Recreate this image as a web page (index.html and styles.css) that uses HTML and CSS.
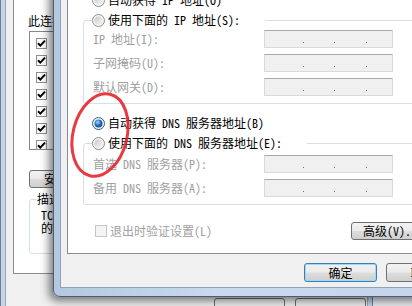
FILE: index.html
```html
<!DOCTYPE html>
<html lang="zh-CN">
<head>
<meta charset="utf-8">
<title>Internet 协议版本 4 (TCP/IPv4) 属性</title>
<link rel="stylesheet" href="styles.css">
</head>
<body>
<div class="desk">
  <div class="bgwin">
    <div class="bgface">
      <div class="panel">
        <div class="plabel">此连接使用下列项目(O):</div>
        <div class="list">
          <div class="li"><span class="cb"><svg width="11" height="11" viewBox="0 0 11 11"><path d="M2 5.2 L4.3 7.6 L9 2.6" fill="none" stroke="#000" stroke-width="2"/></svg></span><span>Microsoft 网络客户端</span></div>
          <div class="li"><span class="cb"><svg width="11" height="11" viewBox="0 0 11 11"><path d="M2 5.2 L4.3 7.6 L9 2.6" fill="none" stroke="#000" stroke-width="2"/></svg></span><span>QoS 数据包计划程序</span></div>
          <div class="li"><span class="cb"><svg width="11" height="11" viewBox="0 0 11 11"><path d="M2 5.2 L4.3 7.6 L9 2.6" fill="none" stroke="#000" stroke-width="2"/></svg></span><span>Microsoft 网络的文件和打印机共享</span></div>
          <div class="li"><span class="cb"><svg width="11" height="11" viewBox="0 0 11 11"><path d="M2 5.2 L4.3 7.6 L9 2.6" fill="none" stroke="#000" stroke-width="2"/></svg></span><span>Internet 协议版本 6 (TCP/IPv6)</span></div>
          <div class="li"><span class="cb"><svg width="11" height="11" viewBox="0 0 11 11"><path d="M2 5.2 L4.3 7.6 L9 2.6" fill="none" stroke="#000" stroke-width="2"/></svg></span><span>Internet 协议版本 4 (TCP/IPv4)</span></div>
          <div class="li"><span class="cb"><svg width="11" height="11" viewBox="0 0 11 11"><path d="M2 5.2 L4.3 7.6 L9 2.6" fill="none" stroke="#000" stroke-width="2"/></svg></span><span>链路层拓扑发现映射器 I/O 驱动程序</span></div>
          <div class="li"><span class="cb"><svg width="11" height="11" viewBox="0 0 11 11"><path d="M2 5.2 L4.3 7.6 L9 2.6" fill="none" stroke="#000" stroke-width="2"/></svg></span><span>链路层拓扑发现响应程序</span></div>
        </div>
        <div class="bbtnrow"><button class="btn bbtn">安装(N)...</button></div>
        <fieldset class="desc">
          <legend>描述</legend>
          <p class="desctext">TCP/IP。该协议是默认的广域网络协议，它提供在不同的相互连接<br>的网络上的通讯。</p>
        </fieldset>
      </div>
      <div class="bgbtns"><button class="btn bgb">确定</button><button class="btn bgb">取消</button></div>
    </div>
  </div>

  <div class="dlg">
    <div class="client">
      <div class="page">
        <div class="radrow"><svg class="radio" width="13" height="13" viewBox="0 0 13 13"><defs><radialGradient id="rdot" cx="0.4" cy="0.35" r="0.7"><stop offset="0" stop-color="#b9e0fb"/><stop offset="0.45" stop-color="#2f7fd0"/><stop offset="1" stop-color="#10407c"/></radialGradient><linearGradient id="roff" x1="0" y1="0" x2="1" y2="1"><stop offset="0" stop-color="#c9c9c9"/><stop offset="1" stop-color="#f6f6f6"/></linearGradient></defs><circle cx="6.5" cy="6.5" r="6" fill="#f4f4f4" stroke="#8e8f8f"/><circle cx="6.5" cy="6.5" r="4" fill="url(#roff)"/></svg><span>自动获得 IP 地址(O)</span></div>

        <fieldset class="grp ipgrp">
          <legend class="lg"><span class="lgin"><svg class="radio" width="13" height="13" viewBox="0 0 13 13"><circle cx="6.5" cy="6.5" r="6" fill="#f4f4f4" stroke="#8e8f8f"/><circle cx="6.5" cy="6.5" r="4" fill="url(#roff)"/></svg><span>使用下面的 IP 地址(S):</span></span></legend>
          <div class="frows">
            <div class="frow"><span class="dis">IP 地址(I):</span><div class="ipbox"><i class="s1"></i><i class="dot"></i><i class="s2"></i><i class="dot"></i><i class="s3"></i><i class="dot"></i></div></div>
            <div class="frow"><span class="dis">子网掩码(U):</span><div class="ipbox"><i class="s1"></i><i class="dot"></i><i class="s2"></i><i class="dot"></i><i class="s3"></i><i class="dot"></i></div></div>
            <div class="frow"><span class="dis">默认网关(D):</span><div class="ipbox"><i class="s1"></i><i class="dot"></i><i class="s2"></i><i class="dot"></i><i class="s3"></i><i class="dot"></i></div></div>
          </div>
        </fieldset>

        <div class="radrow rowc"><svg class="radio" width="13" height="13" viewBox="0 0 13 13"><circle cx="6.5" cy="6.5" r="6" fill="#f4f4f4" stroke="#2c628b"/><circle cx="6.5" cy="6.5" r="4" fill="url(#rdot)"/></svg><span>自动获得 DNS 服务器地址(B)</span></div>

        <fieldset class="grp dnsgrp">
          <legend class="lg"><span class="lgin"><svg class="radio" width="13" height="13" viewBox="0 0 13 13"><circle cx="6.5" cy="6.5" r="6" fill="#f4f4f4" stroke="#8e8f8f"/><circle cx="6.5" cy="6.5" r="4" fill="url(#roff)"/></svg><span>使用下面的 DNS 服务器地址(E):</span></span></legend>
          <div class="frows">
            <div class="frow"><span class="dis">首选 DNS 服务器(P):</span><div class="ipbox"><i class="s1"></i><i class="dot"></i><i class="s2"></i><i class="dot"></i><i class="s3"></i><i class="dot"></i></div></div>
            <div class="frow"><span class="dis">备用 DNS 服务器(A):</span><div class="ipbox"><i class="s1"></i><i class="dot"></i><i class="s2"></i><i class="dot"></i><i class="s3"></i><i class="dot"></i></div></div>
          </div>
        </fieldset>

        <div class="chkrow">
          <div class="chk"><span class="dcb"></span><span class="dis">退出时验证设置(L)</span></div>
          <button class="btn adv">高级(V)...</button>
        </div>
      </div>
      <div class="dbtns"><button class="btn okbtn">确定</button><button class="btn cbtn">取消</button></div>
    </div>
  </div>

  <svg class="ring" width="412" height="306" viewBox="0 0 412 306"><ellipse cx="100" cy="135" rx="27" ry="42" transform="rotate(14 100 135)" fill="none" stroke="#e3262c" stroke-width="3" opacity="0.9"/></svg>
</div>
</body>
</html>
```

FILE: styles.css
```css
* { box-sizing: border-box; }
html, body { margin: 0; padding: 0; }
body {
  overflow: hidden;
  font: 12px/14px "Noto Sans Mono CJK SC", "Noto Sans CJK SC", sans-serif;
  color: #000;
}
.desk {
  position: relative;
  width: 412px;
  height: 306px;
  overflow: hidden;
  background: #e9ecef;
}

/* background window */
.bgwin {
  position: absolute;
  left: 0;
  top: -40px;
  width: 373px;
  height: 380px;
  border: 1px solid #6f7f94;
  border-radius: 6px;
  background: #c5d5e8;
  padding: 4px;
}
.bgface {
  height: 100%;
  border: 1px solid #9aaabd;
  background: #f0f0f0;
  padding: 14px 0 0 7px;
}
.panel {
  width: 352px;
  border: 1px solid #898c95;
  background: #fff;
  padding: 33px 0 19px 15px;
}
.plabel { margin-left: -1px; height: 14px; white-space: nowrap; }
.list {
  margin-top: 3px;
  width: 320px;
  height: 119px;
  overflow: hidden;
  border: 1px solid #828790;
  background: #fff;
  padding: 3px 0 0 6px;
}
.li { display: flex; align-items: center; gap: 12px; height: 17px; white-space: nowrap; }
.cb {
  flex: none;
  width: 11px; height: 11px;
  border: 1px solid #8f8f8f;
  background: #fff;
  display: flex;
}
.cb svg { display: block; margin: -1px; }
.bbtnrow { margin-top: 20px; }
.btn {
  flex: none;
  font: inherit;
  color: #000;
  border: 1px solid #707070;
  border-radius: 3px;
  background: linear-gradient(#f2f2f2 0%, #ebebeb 48%, #dddddd 52%, #cfcfcf 100%);
  padding: 0;
  display: flex;
  align-items: center;
  justify-content: center;
  white-space: nowrap;
}
.bbtn { width: 90px; height: 18px; }
.desc {
  margin: 5px 0 0;
  width: 320px;
  border: 1px solid #d5dfe5;
  border-radius: 3px;
  padding: 3px 0 19px 7px;
  min-width: 0;
}
.desc legend { padding: 0; margin: 0; line-height: 12px; height: 12px; }
.desctext { margin: 0; padding-left: 4px; width: 300px; line-height: 13px; white-space: nowrap; }
.bgbtns { display: flex; gap: 10px; margin-top: 24px; padding-left: 201px; }
.bgb { width: 71px; height: 23px; padding-top: 12px; }

/* front dialog */
.dlg {
  position: absolute;
  left: 53px;
  top: -40px;
  width: 420px;
  border: 1px solid #4c5c72;
  border-radius: 7px;
  background: linear-gradient(90deg, #b4c8e0, #c9daee 40%, #c2d4ea);
  padding: 6px 6px 8px 6px;
  box-shadow: -3px 3px 8px 1px rgba(0, 0, 0, 0.5);
}
.client {
  border: 1px solid #8ea2bb;
  background: #f0f0f0;
  padding: 12px 0 5px 6px;
}
.page {
  border: 1px solid #898c95;
  border-right: 0;
  background: #fff;
  padding: 12px 0 13px 15px;
}
.radrow {
  display: flex;
  align-items: center;
  gap: 3px;
  height: 14px;
  padding-left: 9px;
  white-space: nowrap;
}
.radio { display: block; flex: none; }
.rowc { margin-top: 12px; }
.grp {
  margin: 6px 0 0;
  width: 360px;
  min-width: 0;
  border: 1px solid #d5dfe5;
  border-radius: 3px;
  padding: 3px 0 7px 8px;
}
.dnsgrp { padding-top: 5px; }
.lg { padding: 0 25px 0 0; margin: 0; height: 14px; }
.lgin { display: flex; align-items: center; gap: 3px; height: 14px; white-space: nowrap; }
.frows { display: flex; flex-direction: column; gap: 6px; }
.frow {
  display: grid;
  grid-template-columns: 171px 129px;
  align-items: center;
  padding-left: 1px;
  white-space: nowrap;
}
.dis { color: #a0a0a0; }
.ipbox {
  height: 18px;
  border: 1px solid #dadada;
  border-top-color: #a8a8a8;
  background: #f0f0f0;
  display: flex;
  padding-top: 11px;
}
.ipbox i { display: block; height: 1px; flex: none; }
.s1 { width: 38px; }
.s2 { width: 30px; }
.s3 { width: 31px; }
.ipbox .dot { width: 1px; background: #6c6c6c; }
.chkrow {
  display: grid;
  grid-template-columns: 256px 84px;
  align-items: center;
  margin-top: 17px;
  padding-left: 12px;
}
.chk { display: flex; align-items: center; gap: 3px; white-space: nowrap; }
.dcb {
  flex: none;
  width: 12px; height: 12px;
  border: 1px solid #c6c6c6;
  background: #f4f4f4;
}
.adv { width: 84px; height: 18px; }
.dbtns { display: flex; gap: 9px; margin-top: 9px; padding-left: 237px; }
.okbtn, .cbtn { width: 73px; height: 19px; }
.okbtn {
  border-color: #3c7fb1;
  box-shadow: inset 0 0 0 1px #9fd8f7;
}

.ring { position: absolute; left: 0; top: 0; pointer-events: none; }
```
